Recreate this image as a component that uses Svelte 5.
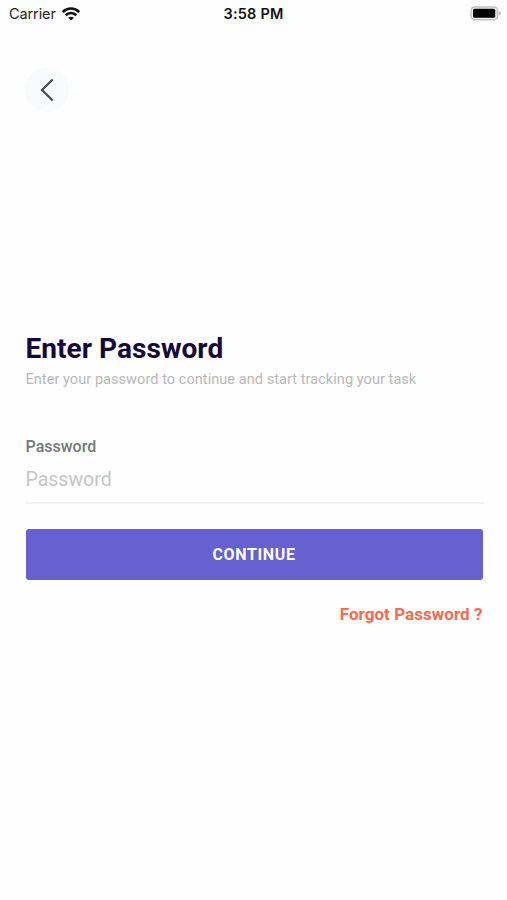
<script>
  let password = $state('');
</script>

<div class="screen">
  <header class="status">
    <div class="carrier">
      <span>Carrier</span>
      <svg width="18" height="14" viewBox="0 0 18 14" fill="none" stroke="#111" stroke-width="2.7">
        <path d="M0.8 5A11.4 11.4 0 0 1 17.2 5" />
        <path d="M3.7 8.3A7.3 7.3 0 0 1 14.3 8.3" />
        <path d="M9 13.6 6.1 10.7Q9 8.6 11.9 10.7Z" fill="#111" stroke="none" />
      </svg>
    </div>
    <span class="time">3:58 PM</span>
    <svg class="battery" width="31" height="15" viewBox="0 0 31 15">
      <rect x="1.1" y="0.9" width="26.4" height="12.8" rx="3.6" fill="#eee" stroke="#c2c2c2" stroke-width="1.5" />
      <rect x="3" y="2.8" width="22.2" height="9" rx="1.5" fill="#000" />
      <path d="M28.7 5Q30.7 5.8 30.7 7.2T28.7 9.4Z" fill="#b5b5b5" />
    </svg>
  </header>

  <button class="back" aria-label="Back">
    <svg width="44" height="44" viewBox="0 0 44 44" fill="none" stroke="#484848" stroke-width="2.2">
      <path d="M27.7 11.5 17 22 27.7 32.5" />
    </svg>
  </button>

  <main>
    <h1>Enter Password</h1>
    <p>Enter your password to continue and start tracking your task</p>
    <label for="password">Password</label>
    <input id="password" type="password" placeholder="Password" bind:value={password} />
    <button class="continue">CONTINUE</button>
    <a href="#forgot">Forgot Password ?</a>
  </main>
</div>

<style>
  :global(body) {
    background: #fefefe;
  }
  .screen {
    box-sizing: border-box;
    height: 900px;
    display: flex;
    flex-direction: column;
    font-family: Roboto, sans-serif;
    background: #fefefe;
  }
  .status {
    height: 28px;
    display: grid;
    grid-template-columns: 1fr auto 1fr;
    align-items: center;
    padding: 0 6px 0 9px;
    font: 14.5px/28px Inter, sans-serif;
    color: #222;
  }
  .carrier {
    display: flex;
    align-items: center;
    gap: 6px;
  }
  .carrier span {
    letter-spacing: -0.1px;
  }
  .time {
    margin-right: 3px;
    font-weight: 600;
    letter-spacing: 0.2px;
    color: #111;
  }
  .battery {
    justify-self: end;
    margin-bottom: 1px;
  }
  button {
    border: 0;
    padding: 0;
    font-family: inherit;
  }
  .back {
    width: 44px;
    height: 44px;
    margin: 40px 0 0 25px;
    border-radius: 50%;
    background: #f9fafb;
  }
  .back svg {
    display: block;
  }
  main {
    display: flex;
    flex-direction: column;
    padding: 219px 24.5px 0 25.5px;
  }
  h1 {
    margin: 0;
    font-size: 28px;
    line-height: 36px;
    font-weight: 700;
    letter-spacing: 0.05px;
    color: #130838;
  }
  p {
    margin: 3px 0 0;
    font-size: 14.5px;
    line-height: 20px;
    letter-spacing: 0.06px;
    color: #b8b8b8;
  }
  label {
    margin-top: 47px;
    font-size: 16px;
    line-height: 20px;
    font-weight: 500;
    color: #777;
  }
  input {
    height: 47px;
    box-sizing: border-box;
    margin: 0 -1px 0 0;
    padding: 0;
    border: 0;
    border-bottom: 2px solid #f2f2f2;
    outline: 0;
    background: transparent;
    font: 19.5px/24px Roboto, sans-serif;
    color: #555;
  }
  input::placeholder {
    color: #c5c5c5;
    opacity: 1;
  }
  .continue {
    height: 51px;
    margin: 25px 0 0;
    border-radius: 3px;
    background: #6660d0;
    color: #fff;
    font-size: 16px;
    font-weight: 700;
    letter-spacing: 0.65px;
  }
  a {
    align-self: flex-end;
    margin-top: 23px;
    font-size: 17px;
    line-height: 22px;
    font-weight: 700;
    letter-spacing: 0.05px;
    color: #f76b50;
    text-decoration: none;
  }
</style>
